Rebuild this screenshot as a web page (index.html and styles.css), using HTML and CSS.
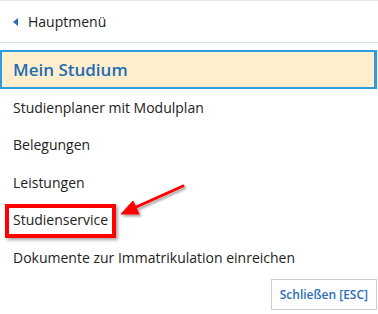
FILE: index.html
```html
<!DOCTYPE html>
<html lang="de">
<head>
  <meta charset="UTF-8">
  <meta name="viewport" content="width=device-width, initial-scale=1.0">
  <title>Mein Studium</title>
  <link rel="stylesheet" href="styles.css">
</head>
<body>
  <nav class="menu">
    <a class="back-link" href="#">
      <span class="chevron"></span>
      Hauptmenü
    </a>
    <div class="current">Mein Studium</div>
    <ul class="menu-list">
      <li><a href="#">Studienplaner mit Modulplan</a></li>
      <li><a href="#">Belegungen</a></li>
      <li><a href="#">Leistungen</a></li>
      <li><a href="#" class="marked">Studienservice</a></li>
      <li><a href="#">Dokumente zur Immatrikulation einreichen</a></li>
    </ul>
    <div class="menu-footer">
      <button class="close-btn">Schließen [ESC]</button>
    </div>
  </nav>

  <!-- annotation arrow -->
  <svg class="arrow" width="90" height="50" viewBox="0 0 90 50">
    <defs>
      <filter id="shadow" x="-20%" y="-20%" width="140%" height="140%">
        <feDropShadow dx="2" dy="2" stdDeviation="1.2" flood-color="#000" flood-opacity="0.35"/>
      </filter>
    </defs>
    <g filter="url(#shadow)" fill="#f00" stroke="#f00">
      <line x1="73" y1="5" x2="24" y2="27" stroke-width="3" stroke-linecap="round"/>
      <polygon points="11,33 23,20 29,33" stroke-width="1" stroke-linejoin="round"/>
    </g>
  </svg>
</body>
</html>
```

FILE: styles.css
```css
body {
  margin: 0;
  font-family: "Open Sans", Arial, sans-serif;
  color: #222;
  background: #fff;
}
a {
  color: inherit;
  text-decoration: none;
}
.menu {
  border-top: 1px solid #e5e5e5;
}
.back-link {
  display: flex;
  align-items: center;
  gap: 10px;
  padding: 10.5px 13px;
  font-size: 14px;
  line-height: 20px;
  border-bottom: 1px solid #d2e7f5;
}
.chevron {
  width: 0;
  height: 0;
  border-top: 4px solid transparent;
  border-bottom: 4px solid transparent;
  border-right: 5px solid #2a6ebb;
}
.current {
  margin-top: 7px;
  margin-right: 1px;
  border: 2px solid #2d9be3;
  border-right-width: 3px;
  background: #fdefcd;
  color: #1f6cb5;
  font-size: 17px;
  font-weight: 600;
  line-height: 35px;
  padding-left: 11px;
}
.menu-list {
  list-style: none;
  margin: 0;
  padding: 0;
}
.menu-list a {
  display: block;
  padding: 8.75px 13px;
  font-size: 14px;
  line-height: 20px;
}
.menu-list a.marked {
  position: relative;
  display: inline-block;
}
.marked::after {
  content: "";
  position: absolute;
  left: 5px;
  right: 5px;
  top: 2px;
  bottom: 1px;
  border: 4px solid #f00;
  box-shadow: 2px 2px 3px rgba(0, 0, 0, 0.35);
}
.menu-footer {
  display: flex;
  justify-content: flex-end;
  padding: 2px 1px 0 0;
}
.close-btn {
  font-family: inherit;
  font-size: 12px;
  font-weight: 600;
  line-height: 17px;
  color: #2c6db5;
  background: #fff;
  border: 1px solid #cfcfcf;
  padding: 6px 8px;
  cursor: pointer;
}
.arrow {
  position: absolute;
  left: 110px;
  top: 181px;
}
```
